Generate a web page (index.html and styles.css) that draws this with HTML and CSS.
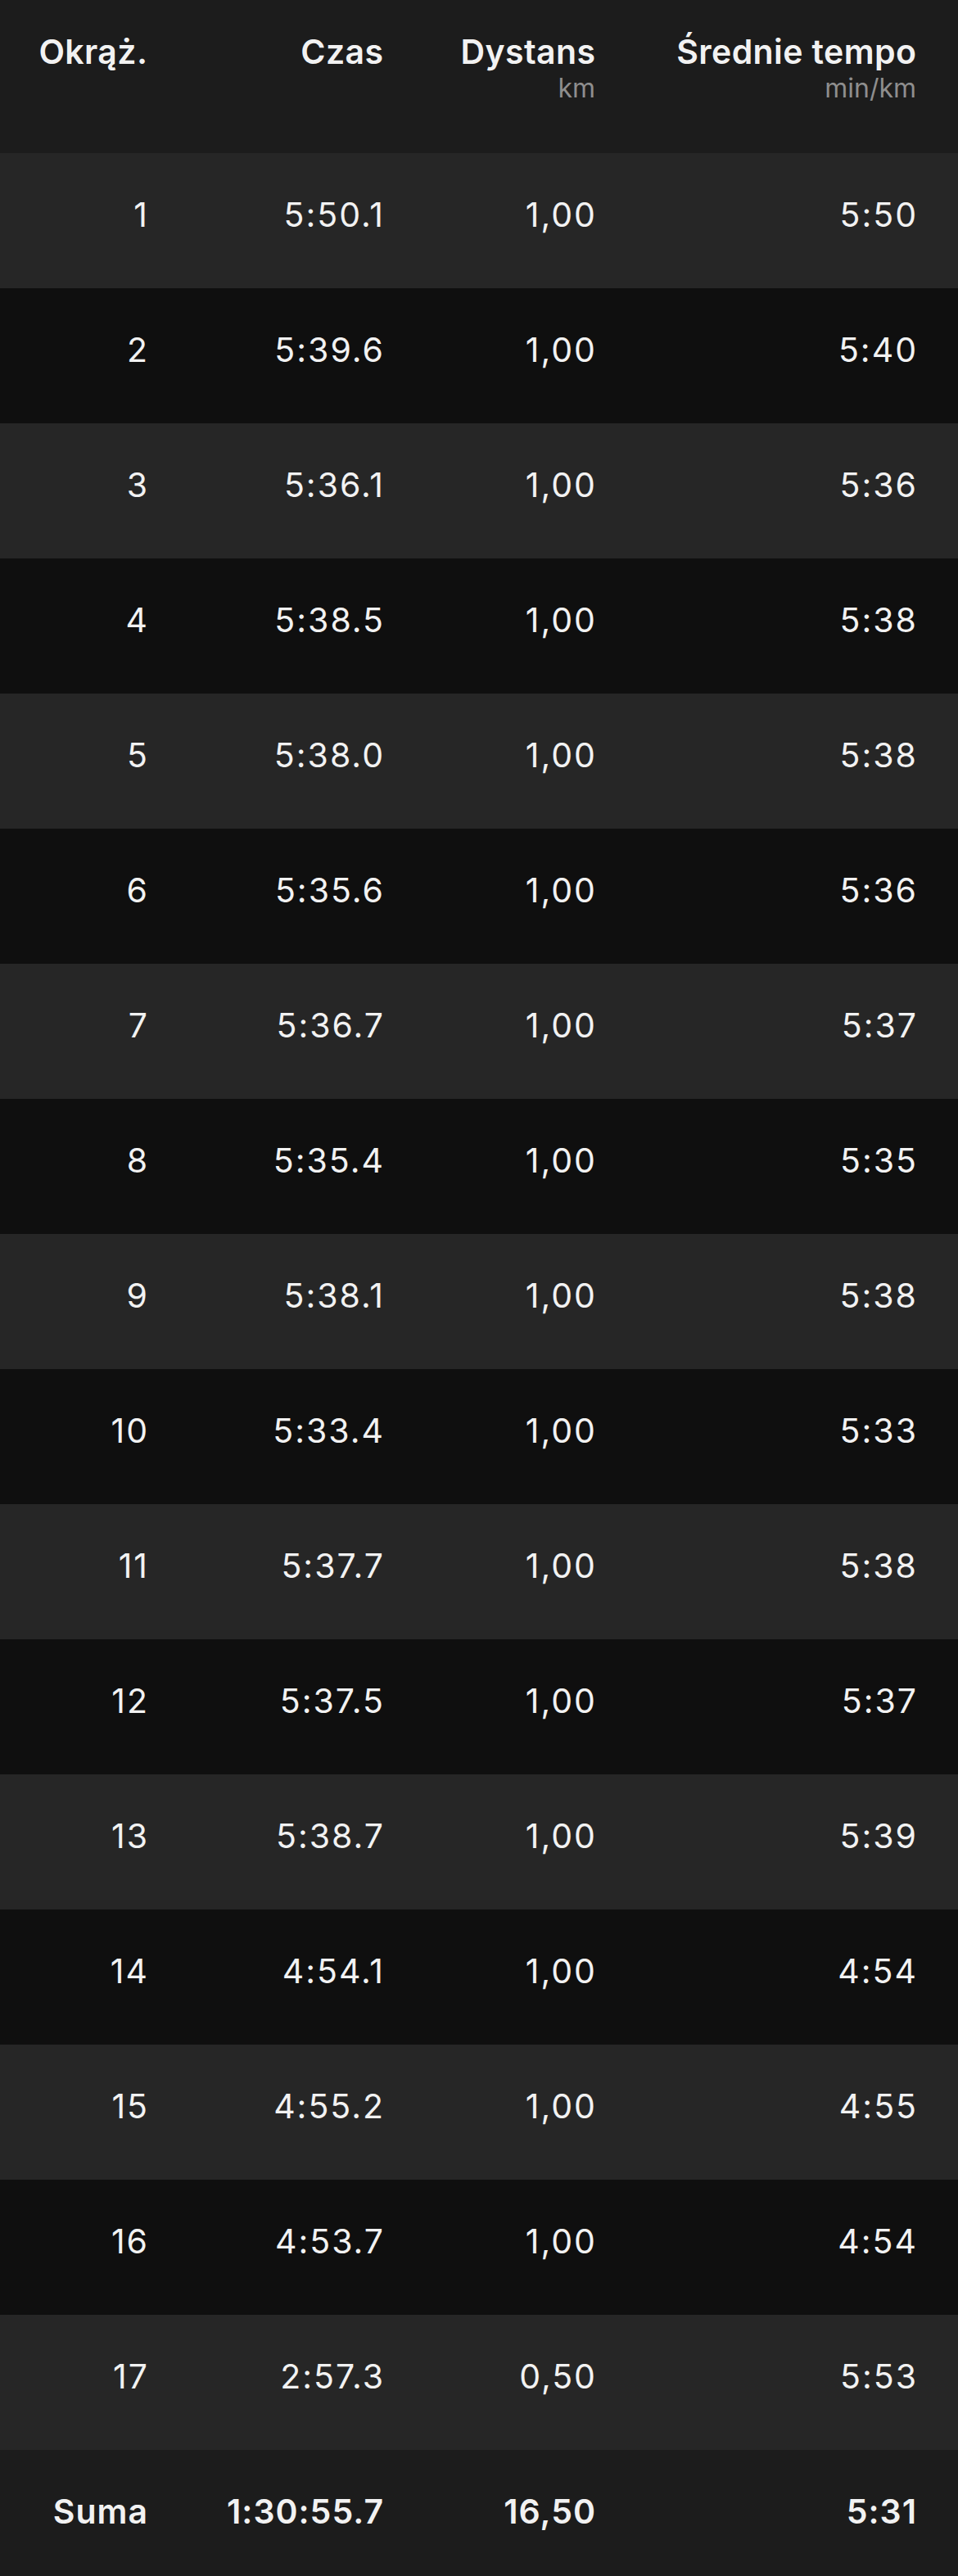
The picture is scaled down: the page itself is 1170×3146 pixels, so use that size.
FILE: index.html
```html
<!DOCTYPE html>
<html lang="pl">
<head>
<meta charset="utf-8">
<link rel="stylesheet" href="styles.css">
</head>
<body>
<div class="table">
  <div class="head">
    <div class="hcell"><span class="title">Okrąż.</span></div>
    <div class="hcell"><span class="title">Czas</span></div>
    <div class="hcell"><span class="title">Dystans</span><span class="unit">km</span></div>
    <div class="hcell"><span class="title">Średnie tempo</span><span class="unit">min/km</span></div>
  </div>
  <div class="row odd"><span>1</span><span>5:50.1</span><span>1,00</span><span>5:50</span></div>
  <div class="row even"><span>2</span><span>5:39.6</span><span>1,00</span><span>5:40</span></div>
  <div class="row odd"><span>3</span><span>5:36.1</span><span>1,00</span><span>5:36</span></div>
  <div class="row even"><span>4</span><span>5:38.5</span><span>1,00</span><span>5:38</span></div>
  <div class="row odd"><span>5</span><span>5:38.0</span><span>1,00</span><span>5:38</span></div>
  <div class="row even"><span>6</span><span>5:35.6</span><span>1,00</span><span>5:36</span></div>
  <div class="row odd"><span>7</span><span>5:36.7</span><span>1,00</span><span>5:37</span></div>
  <div class="row even"><span>8</span><span>5:35.4</span><span>1,00</span><span>5:35</span></div>
  <div class="row odd"><span>9</span><span>5:38.1</span><span>1,00</span><span>5:38</span></div>
  <div class="row even"><span>10</span><span>5:33.4</span><span>1,00</span><span>5:33</span></div>
  <div class="row odd"><span>11</span><span>5:37.7</span><span>1,00</span><span>5:38</span></div>
  <div class="row even"><span>12</span><span>5:37.5</span><span>1,00</span><span>5:37</span></div>
  <div class="row odd"><span>13</span><span>5:38.7</span><span>1,00</span><span>5:39</span></div>
  <div class="row even"><span>14</span><span>4:54.1</span><span>1,00</span><span>4:54</span></div>
  <div class="row odd"><span>15</span><span>4:55.2</span><span>1,00</span><span>4:55</span></div>
  <div class="row even"><span>16</span><span>4:53.7</span><span>1,00</span><span>4:54</span></div>
  <div class="row odd"><span>17</span><span>2:57.3</span><span>0,50</span><span>5:53</span></div>
  <div class="row total"><span>Suma</span><span>1:30:55.7</span><span>16,50</span><span>5:31</span></div>
</div>
</body>
</html>
```

FILE: styles.css
```css
html, body {
  margin: 0;
  padding: 0;
  background: #1c1c1c;
}
body {
  font-family: Inter, "Noto Sans", sans-serif;
  color: #f2f2f2;
  width: 1170px;
}
.table {
  display: flex;
  flex-direction: column;
}
.head, .row {
  display: grid;
  grid-template-columns: 180px 288px 259px 392px;
  padding-right: 51px;
  box-sizing: border-box;
  text-align: right;
}
.head {
  height: 187px;
  background: #1c1c1c;
  padding-top: 38px;
  align-items: start;
}
.hcell {
  display: flex;
  flex-direction: column;
  align-items: flex-end;
}
.title {
  font-size: 41px;
  font-weight: 600;
  line-height: 50px;
  letter-spacing: 0.4px;
  margin-right: -0.4px;
}
.unit {
  font-size: 32px;
  color: #8e8e8e;
  line-height: 40px;
}
.row {
  height: 165px;
  padding-top: 50px;
  align-items: start;
  font-size: 41px;
  line-height: 50px;
  font-weight: 400;
}
.row span {
  letter-spacing: 2px;
  margin-right: -2px;
}
.odd { background: #262626; }
.even { background: #0f0f0f; }
.total {
  height: 154px;
  background: #1c1c1c;
  font-weight: 600;
}
.total span {
  letter-spacing: 1px;
  margin-right: -1px;
}
```
